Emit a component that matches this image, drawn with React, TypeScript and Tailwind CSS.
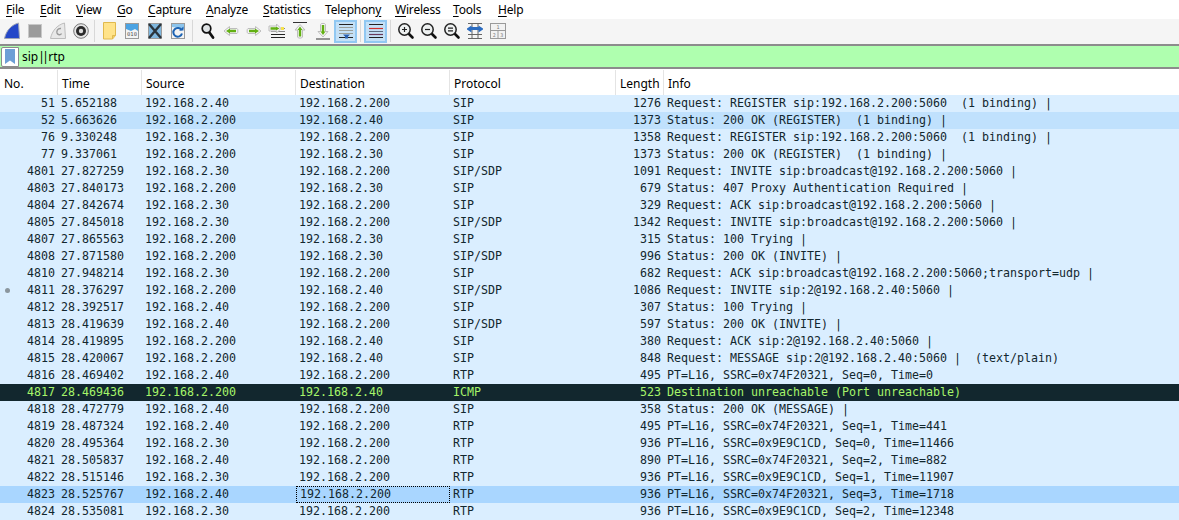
import type { ReactNode } from "react";

const uiFont = "font-['Noto_Sans',sans-serif]";
const monoFont = "font-['DejaVu_Sans_Mono',monospace]";

const menus = [
  { before: "", key: "F", after: "ile", width: "w-[34px]" },
  { before: "", key: "E", after: "dit", width: "w-[36px]" },
  { before: "", key: "V", after: "iew", width: "w-[41px]" },
  { before: "", key: "G", after: "o", width: "w-[31px]" },
  { before: "", key: "C", after: "apture", width: "w-[58px]" },
  { before: "", key: "A", after: "nalyze", width: "w-[57px]" },
  { before: "", key: "S", after: "tatistics", width: "w-[62px]" },
  { before: "Telephon", key: "y", after: "", width: "w-[70px]" },
  { before: "", key: "W", after: "ireless", width: "w-[58px]" },
  { before: "", key: "T", after: "ools", width: "w-[45px]" },
  { before: "", key: "H", after: "elp", width: "w-[40px]" },
];

function Ico({ children }: { children: ReactNode }) {
  return (
    <svg width="18" height="18" viewBox="0 0 18 18" fill="none">
      {children}
    </svg>
  );
}

function Doc({ children, fill = "#f4f4f4" }: { children?: ReactNode; fill?: string }) {
  return (
    <Ico>
      <rect x="2.5" y="1.5" width="13" height="15" fill={fill} stroke="#9a9a9a" />
      {children}
    </Ico>
  );
}

function Lens({ mark }: { mark?: "plus" | "minus" | "equal" }) {
  return (
    <Ico>
      <path d="M11 11L15.5 15.5" stroke="#111" strokeWidth="2.6" strokeLinecap="round" />
      <circle cx="7.5" cy="7.5" r="5.7" fill="#eef1f1" stroke="#222" strokeWidth="1.5" />
      {mark === "plus" && <path d="M5 7.5H10M7.5 5V10" stroke="#222" strokeWidth="1.2" />}
      {mark === "minus" && <path d="M5 7.5H10" stroke="#222" strokeWidth="1.2" />}
      {mark === "equal" && <path d="M5 6.2H10M5 8.8H10" stroke="#222" strokeWidth="1.2" />}
    </Ico>
  );
}

const green = "#62b012";
const rim = "#bdbdbd";

const icons: Record<string, ReactNode> = {
  fin: (
    <Ico>
      <path d="M1.5 16.5C3 9 8 3 15.5 1L16.5 16.5Z" fill="#2447c8" stroke="#9fa6b5" />
    </Ico>
  ),
  stop: (
    <Ico>
      <rect x="2.5" y="2.5" width="13" height="13" fill="#9b9b9b" stroke="#c8c8c8" />
    </Ico>
  ),
  restart: (
    <Ico>
      <path d="M1.5 16.5C3 9 8 3 15.5 1L16.5 16.5Z" fill="#e8e8e8" stroke="#bcbcbc" />
      <path d="M12 6.5C8.5 6 7.5 9 8 11C8.6 13 11.5 13.5 12.5 11.5" stroke="#9a9a9a" strokeWidth="1.4" />
    </Ico>
  ),
  options: (
    <Ico>
      <circle cx="9" cy="9" r="7.3" fill="#e6e6e6" stroke="#777" />
      <circle cx="9" cy="9" r="5" fill="#2a2a2a" />
      <circle cx="9" cy="9" r="2.2" fill="#dcdcdc" />
    </Ico>
  ),
  file: (
    <Ico>
      <path d="M3.5 0.5H15.5V13.5L12.5 17H3.5Z" fill="#ffe38a" stroke="#e0b94e" />
      <path d="M12.5 17V13.5H15.5" fill="#f2cc63" stroke="#e0b94e" />
    </Ico>
  ),
  open: (
    <Doc>
      <path d="M3 2H15V9L12 7L8 9L3 7Z" fill="#4ba3e3" />
      <text x="9" y="14.3" fontSize="5.5" textAnchor="middle" fill="#555" fontFamily="DejaVu Sans Mono">010</text>
    </Doc>
  ),
  close: (
    <Doc fill="#7fb7de">
      <path d="M3 2L15 16M15 2L3 16" stroke="#2a343c" strokeWidth="2.4" />
    </Doc>
  ),
  reload: (
    <Doc>
      <path d="M3 2H15V7L3 5Z" fill="#8cc4ec" />
      <path d="M12.6 8.2A4.4 4.4 0 1 0 13 11.5" stroke="#1d63b3" strokeWidth="2" />
      <path d="M10 8.5H14.5V4.5Z" fill="#1d63b3" />
    </Doc>
  ),
  find: (
    <Ico>
      <path d="M10 10L14 15.5" stroke="#111" strokeWidth="2.8" strokeLinecap="round" />
      <circle cx="7.5" cy="6.5" r="4.3" fill="#dfe3e5" stroke="#111" strokeWidth="1.7" />
    </Ico>
  ),
  back: (
    <Ico>
      <path d="M2 9L7.5 4.5V6.5H15C16.2 6.5 16.2 11.5 15 11.5H7.5V13.5Z" fill="#f4f4f4" stroke={rim} />
      <path d="M4 9L8 6.5V7.8H14V10.2H8V11.5Z" fill={green} />
    </Ico>
  ),
  forward: (
    <Ico>
      <path d="M16 9L10.5 4.5V6.5H3C1.8 6.5 1.8 11.5 3 11.5H10.5V13.5Z" fill="#f4f4f4" stroke={rim} />
      <path d="M14 9L10 6.5V7.8H4V10.2H10V11.5Z" fill={green} />
    </Ico>
  ),
  jump: (
    <Ico>
      <path d="M3 6.5H17M3 9.5H17" stroke="#888" />
      <path d="M3 12.5H17M3 15.5H17" stroke="#222" />
      <path d="M13 6.5L8.5 2V4H1V9H8.5V11Z" fill="#f4f4f4" stroke={rim} />
      <path d="M11.5 6.5L8 4.5V5.3H2.5V7.7H8V8.5Z" fill={green} />
      <rect x="13" y="5" width="3" height="3" fill="#f6e24d" />
    </Ico>
  ),
  top: (
    <Ico>
      <path d="M2 0.5H16" stroke="#333" />
      <path d="M9 2.5L14 8H11.5V15C11.5 16.5 6.5 16.5 6.5 15V8H4Z" fill="#f4f4f4" stroke={rim} />
      <path d="M9 4.5L11.5 8H10.2V14.5H7.8V8H6.5Z" fill={green} />
    </Ico>
  ),
  bottom: (
    <Ico>
      <path d="M2 17H16" stroke="#333" />
      <path d="M9 15L14 9.5H11.5V2.5C11.5 1 6.5 1 6.5 2.5V9.5H4Z" fill="#f4f4f4" stroke={rim} />
      <path d="M9 13L11.5 9.5H10.2V3H7.8V9.5H6.5Z" fill={green} />
    </Ico>
  ),
  autoscroll: (
    <Ico>
      <path d="M2 2.5H16" stroke="#222" />
      <path d="M2 5.5H16M2 8.5H16M2 11.5H16" stroke="#9a9f9a" />
      <path d="M2 15.5H16" stroke="#222" />
      <path d="M6 12.5H13L11 14.5V16.5H8V14.5Z" fill="#2c62b0" />
    </Ico>
  ),
  colorize: (
    <Ico>
      <path d="M2 2.5H16" stroke="#222" />
      <path d="M2 6.5H16" stroke="#d0312d" strokeWidth="1.2" />
      <path d="M2 9.5H16" stroke="#5d6c80" />
      <path d="M2 12.5H16" stroke="#6a3a5c" strokeWidth="1.2" />
      <path d="M2 15.5H16" stroke="#222" />
    </Ico>
  ),
  zoomIn: <Lens mark="plus" />,
  zoomOut: <Lens mark="minus" />,
  zoomReset: <Lens mark="equal" />,
  resize: (
    <Ico>
      <path d="M2 1.5H16M2 16.5H16M2 12.5H16M6 1.5V16.5M12 1.5V16.5" stroke="#666" />
      <path d="M1 6.5L5.5 3.5V10.5L1 7.5Z" fill="#2c6cc0" />
      <path d="M17 6.5L12.5 3.5V10.5L17 7.5Z" fill="#2c6cc0" />
      <rect x="5" y="5" width="8" height="3" fill="#2c6cc0" />
    </Ico>
  ),
  layout: (
    <Ico>
      <rect x="1.5" y="1.5" width="15" height="15" fill="#f2f2f2" stroke="#9a9a9a" />
      <path d="M1.5 8.5H16.5M9 8.5V16.5" stroke="#9a9a9a" />
      <text x="9" y="7" fontSize="5" textAnchor="middle" fill="#777" fontFamily="DejaVu Sans Mono">1</text>
      <text x="5.2" y="14.5" fontSize="5" textAnchor="middle" fill="#777" fontFamily="DejaVu Sans Mono">2</text>
      <text x="12.8" y="14.5" fontSize="5" textAnchor="middle" fill="#777" fontFamily="DejaVu Sans Mono">3</text>
    </Ico>
  ),
};

const toolbar: string[][] = [
  ["fin", "stop", "restart", "options"],
  ["file", "open", "close", "reload"],
  ["find", "back", "forward", "jump", "top", "bottom", "autoscroll"],
  ["colorize"],
  ["zoomIn", "zoomOut", "zoomReset", "resize", "layout"],
];

type Packet = {
  no: number;
  time: string;
  src: string;
  dst: string;
  proto: string;
  len: number;
  info: string;
  kind?: "related" | "error" | "selected";
  dot?: boolean;
};

const a30 = "192.168.2.30";
const a40 = "192.168.2.40";
const a200 = "192.168.2.200";

const packets: Packet[] = [
  { no: 51, time: "5.652188", src: a40, dst: a200, proto: "SIP", len: 1276, info: "Request: REGISTER sip:192.168.2.200:5060  (1 binding) | " },
  { no: 52, time: "5.663626", src: a200, dst: a40, proto: "SIP", len: 1373, info: "Status: 200 OK (REGISTER)  (1 binding) | ", kind: "related" },
  { no: 76, time: "9.330248", src: a30, dst: a200, proto: "SIP", len: 1358, info: "Request: REGISTER sip:192.168.2.200:5060  (1 binding) | " },
  { no: 77, time: "9.337061", src: a200, dst: a30, proto: "SIP", len: 1373, info: "Status: 200 OK (REGISTER)  (1 binding) | " },
  { no: 4801, time: "27.827259", src: a30, dst: a200, proto: "SIP/SDP", len: 1091, info: "Request: INVITE sip:broadcast@192.168.2.200:5060 | " },
  { no: 4803, time: "27.840173", src: a200, dst: a30, proto: "SIP", len: 679, info: "Status: 407 Proxy Authentication Required | " },
  { no: 4804, time: "27.842674", src: a30, dst: a200, proto: "SIP", len: 329, info: "Request: ACK sip:broadcast@192.168.2.200:5060 | " },
  { no: 4805, time: "27.845018", src: a30, dst: a200, proto: "SIP/SDP", len: 1342, info: "Request: INVITE sip:broadcast@192.168.2.200:5060 | " },
  { no: 4807, time: "27.865563", src: a200, dst: a30, proto: "SIP", len: 315, info: "Status: 100 Trying | " },
  { no: 4808, time: "27.871580", src: a200, dst: a30, proto: "SIP/SDP", len: 996, info: "Status: 200 OK (INVITE) | " },
  { no: 4810, time: "27.948214", src: a30, dst: a200, proto: "SIP", len: 682, info: "Request: ACK sip:broadcast@192.168.2.200:5060;transport=udp | " },
  { no: 4811, time: "28.376297", src: a200, dst: a40, proto: "SIP/SDP", len: 1086, info: "Request: INVITE sip:2@192.168.2.40:5060 | ", dot: true },
  { no: 4812, time: "28.392517", src: a40, dst: a200, proto: "SIP", len: 307, info: "Status: 100 Trying | " },
  { no: 4813, time: "28.419639", src: a40, dst: a200, proto: "SIP/SDP", len: 597, info: "Status: 200 OK (INVITE) | " },
  { no: 4814, time: "28.419895", src: a200, dst: a40, proto: "SIP", len: 380, info: "Request: ACK sip:2@192.168.2.40:5060 | " },
  { no: 4815, time: "28.420067", src: a200, dst: a40, proto: "SIP", len: 848, info: "Request: MESSAGE sip:2@192.168.2.40:5060 |  (text/plain) " },
  { no: 4816, time: "28.469402", src: a40, dst: a200, proto: "RTP", len: 495, info: "PT=L16, SSRC=0x74F20321, Seq=0, Time=0" },
  { no: 4817, time: "28.469436", src: a200, dst: a40, proto: "ICMP", len: 523, info: "Destination unreachable (Port unreachable)", kind: "error" },
  { no: 4818, time: "28.472779", src: a40, dst: a200, proto: "SIP", len: 358, info: "Status: 200 OK (MESSAGE) | " },
  { no: 4819, time: "28.487324", src: a40, dst: a200, proto: "RTP", len: 495, info: "PT=L16, SSRC=0x74F20321, Seq=1, Time=441" },
  { no: 4820, time: "28.495364", src: a30, dst: a200, proto: "RTP", len: 936, info: "PT=L16, SSRC=0x9E9C1CD, Seq=0, Time=11466" },
  { no: 4821, time: "28.505837", src: a40, dst: a200, proto: "RTP", len: 890, info: "PT=L16, SSRC=0x74F20321, Seq=2, Time=882" },
  { no: 4822, time: "28.515146", src: a30, dst: a200, proto: "RTP", len: 936, info: "PT=L16, SSRC=0x9E9C1CD, Seq=1, Time=11907" },
  { no: 4823, time: "28.525767", src: a40, dst: a200, proto: "RTP", len: 936, info: "PT=L16, SSRC=0x74F20321, Seq=3, Time=1718", kind: "selected" },
  { no: 4824, time: "28.535081", src: a30, dst: a200, proto: "RTP", len: 936, info: "PT=L16, SSRC=0x9E9C1CD, Seq=2, Time=12348" },
];

const rowStyles = {
  normal: "bg-[#daeeff] text-[#12272e]",
  related: "bg-[#c0e1fd] text-[#12272e]",
  selected: "bg-[#a9d6ff] text-[#12272e]",
  error: "bg-[#12272e] text-[#a6f56a]",
};

function PacketRow({ p }: { p: Packet }) {
  return (
    <div className={`flex h-[17px] items-center whitespace-pre leading-[17px] ${rowStyles[p.kind ?? "normal"]}`}>
      <div className="relative w-[58px] shrink-0 pr-[3px] text-right">
        {p.dot && <span className="absolute left-[5px] top-[6px] h-[5px] w-[5px] rounded-full bg-[#8b969e]" />}
        {p.no}
      </div>
      <div className="w-[84px] shrink-0 pl-[3px]">{p.time}</div>
      <div className="w-[154px] shrink-0 pl-[3px]">{p.src}</div>
      <div
        className={`h-[17px] w-[154px] shrink-0 pl-[3px] ${
          p.kind === "selected" ? "border border-dotted border-black pl-[2px] leading-[15px]" : ""
        }`}
      >
        {p.dst}
      </div>
      <div className="w-[166px] shrink-0 pl-[3px]">{p.proto}</div>
      <div className="w-[48px] shrink-0 pr-[3px] text-right">{p.len}</div>
      <div className="flex-1 pl-[3px]">{p.info}</div>
    </div>
  );
}

function HeaderCell({ label, width }: { label: string; width: string }) {
  return (
    <div className={`flex h-[25px] shrink-0 items-center border-r border-[#e4e4e4] pl-[4px] pt-[2px] ${width}`}>{label}</div>
  );
}

export default function App() {
  return (
    <div className={`h-[520px] w-[1179px] overflow-hidden bg-white text-[12px] text-black ${uiFont}`}>
      {/* Menu bar */}
      <div className="flex h-[19px] items-center pl-[6px] leading-[19px] tracking-[-0.2px]">
        {menus.map((m) => (
          <span key={m.key + m.after} className={`shrink-0 ${m.width}`}>
            {m.before}
            <span className="underline underline-offset-2">{m.key}</span>
            {m.after}
          </span>
        ))}
      </div>

      {/* Toolbar */}
      <div className="flex h-[27px] items-center border-b-2 border-[#8c8c8c] bg-[#f5f5f5] pb-[1px]">
        {toolbar.map((group, i) => (
          <div key={group[0]} className="flex items-center">
            {i > 0 && <div className={`h-[22px] w-px bg-[#d8d8d8] ${i === 1 ? "mx-[2px]" : "mx-[3px]"}`} />}
            {group.map((name) => {
              const checked = name === "autoscroll" || name === "colorize";
              return (
                <div
                  key={name}
                  className={`flex h-[23px] w-[23px] items-center justify-center ${
                    checked ? "border-2 border-[#91c8f2] bg-[#c4e0f6]" : ""
                  }`}
                >
                  {icons[name]}
                </div>
              );
            })}
          </div>
        ))}
      </div>

      {/* Display filter */}
      <div className="flex h-[23px] items-center border-b-2 border-[#8c8c8c] bg-[#afffaf]">
        <div className="ml-[1px] flex h-[20px] w-[18px] items-center justify-center rounded-l-[2px] border border-[#8c8c8c] bg-white">
          <svg width="10" height="15" viewBox="0 0 10 15">
            <path d="M0 0H10V15L5 11.5L0 15Z" fill="#6d9fd6" />
          </svg>
        </div>
        <span className="pl-[3px] pt-[1px] text-[12px] leading-[20px]">
          sip<span className="tracking-[-2.6px]">||</span>
          <span className="pl-[2px]">rtp</span>
        </span>
      </div>

      {/* Packet list header */}
      <div className="mt-[1px] flex h-[25px] bg-white">
        <HeaderCell label="No." width="w-[58px]" />
        <HeaderCell label="Time" width="w-[84px]" />
        <HeaderCell label="Source" width="w-[154px]" />
        <HeaderCell label="Destination" width="w-[154px]" />
        <HeaderCell label="Protocol" width="w-[166px]" />
        <HeaderCell label="Length" width="w-[48px]" />
        <div className="flex h-[25px] flex-1 items-center pl-[4px] pt-[2px]">Info</div>
      </div>

      {/* Packet list */}
      <div className={`text-[11.63px] ${monoFont}`}>
        {packets.map((p) => (
          <PacketRow key={p.no} p={p} />
        ))}
      </div>
    </div>
  );
}
